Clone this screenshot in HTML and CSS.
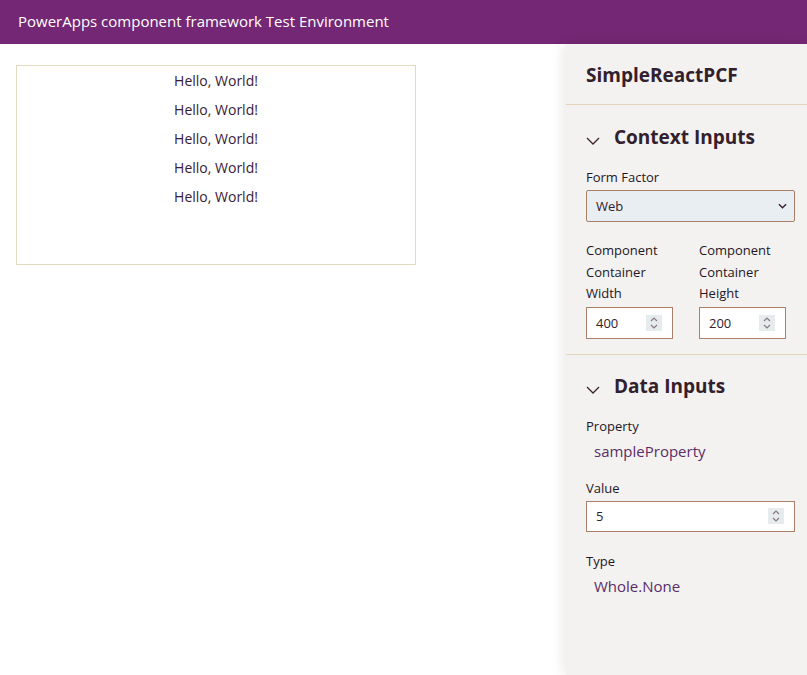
FILE: index.html
```html
<!DOCTYPE html>
<html>
<head>
<meta charset="utf-8">
<link rel="stylesheet" href="styles.css">
</head>
<body>
<header class="topbar">PowerApps component framework Test Environment</header>
<div class="main">
  <div class="canvas">
    <div class="component">
      <div class="hello">Hello, World!</div>
      <div class="hello">Hello, World!</div>
      <div class="hello">Hello, World!</div>
      <div class="hello">Hello, World!</div>
      <div class="hello">Hello, World!</div>
    </div>
  </div>
  <aside class="panel">
    <h1 class="panel-title">SimpleReactPCF</h1>
    <section class="section">
      <h2 class="section-head"><svg class="chev" viewBox="0 0 14 8" width="14" height="8"><path d="M1 1 L7 7 L13 1" fill="none" stroke="#3b2330" stroke-width="1.3"/></svg><span>Context Inputs</span></h2>
      <div class="field">
        <div class="label">Form Factor</div>
        <div class="select"><span>Web</span><svg viewBox="0 0 10 6" width="9" height="6"><path d="M1 1 L5 5 L9 1" fill="none" stroke="#3b2330" stroke-width="1.6"/></svg></div>
      </div>
      <div class="pair">
        <div class="col">
          <div class="label">Component Container Width</div>
          <div class="num small"><span>400</span><svg class="spin" viewBox="0 0 16 16" width="16" height="16"><rect width="16" height="16" fill="#e6ebee"/><path d="M5 6 L8 3 L11 6 M5 10 L8 13 L11 10" fill="none" stroke="#8a7a80" stroke-width="1.2"/></svg></div>
        </div>
        <div class="col">
          <div class="label">Component Container Height</div>
          <div class="num small"><span>200</span><svg class="spin" viewBox="0 0 16 16" width="16" height="16"><rect width="16" height="16" fill="#e6ebee"/><path d="M5 6 L8 3 L11 6 M5 10 L8 13 L11 10" fill="none" stroke="#8a7a80" stroke-width="1.2"/></svg></div>
        </div>
      </div>
    </section>
    <section class="section">
      <h2 class="section-head"><svg class="chev" viewBox="0 0 14 8" width="14" height="8"><path d="M1 1 L7 7 L13 1" fill="none" stroke="#3b2330" stroke-width="1.3"/></svg><span>Data Inputs</span></h2>
      <div class="field">
        <div class="label">Property</div>
        <div class="value">sampleProperty</div>
      </div>
      <div class="field field-num">
        <div class="label">Value</div>
        <div class="num"><span>5</span><svg class="spin" viewBox="0 0 16 16" width="16" height="16"><rect width="16" height="16" fill="#e6ebee"/><path d="M5 6 L8 3 L11 6 M5 10 L8 13 L11 10" fill="none" stroke="#8a7a80" stroke-width="1.2"/></svg></div>
      </div>
      <div class="field">
        <div class="label">Type</div>
        <div class="value">Whole.None</div>
      </div>
    </section>
  </aside>
</div>
</body>
</html>
```
FILE: styles.css
```css
* { box-sizing: border-box; }
html, body { margin: 0; padding: 0; height: 100%; }
body {
  font-family: "Open Sans", "Noto Sans", sans-serif;
  color: #32202c;
  background: #fff;
  display: flex;
  flex-direction: column;
  overflow: hidden;
}
.topbar {
  height: 44px;
  background: #742774;
  color: #fff;
  font-size: 15px;
  padding: 11px 0 0 18px;
  flex: none;
}
.main {
  flex: 1;
  display: flex;
  min-height: 0;
}
.canvas {
  flex: 1;
  padding: 21px 0 0 16px;
}
.component {
  width: 400px;
  height: 200px;
  border: 1px solid #e3d9bf;
  padding-top: 0;
}
.hello {
  text-align: center;
  font-size: 14px;
  line-height: 29px;
  color: #3a1a36;
}
.panel {
  width: 241px;
  flex: none;
  background: #f3f2f1;
  box-shadow: -4px 0 12px rgba(0,0,0,0.08);
}
.panel-title {
  margin: 0;
  font-size: 19px;
  font-weight: 700;
  padding: 18px 20px 0 20px;
  height: 61px;
  border-bottom: 1px solid #e3d4bb;
}
.section {
  padding: 0 12px 0 20px;
  border-bottom: 1px solid #e3d4bb;
}
.section:last-child { border-bottom: none; }
.section-head {
  margin: 0;
  display: flex;
  align-items: center;
  font-size: 19px;
  font-weight: 700;
  height: 62px;
  padding-top: 2px;
}
.section + .section .section-head { height: 61px; }
.chev { margin: 8px 14px 0 0; }
.field { margin-bottom: 14px; }
.field-num { margin-bottom: 19px; }
.pair .label { margin-top: 4px; line-height: 21.5px; }
.label {
  font-size: 13px;
  font-weight: 500;
  line-height: 21px;
  margin-bottom: 2px;
  color: #24161f;
}
.select {
  height: 32px;
  border: 1px solid #a98067;
  border-radius: 2px;
  background: #e9eef2;
  display: flex;
  align-items: center;
  justify-content: space-between;
  padding: 0 7px 0 9px;
  font-size: 13px;
}
.pair {
  display: flex;
  gap: 26px;
  padding-bottom: 15px;
}
.col { width: 87px; }
.num {
  height: 31px;
  border: 1px solid #a98067;
  background: #fff;
  display: flex;
  align-items: center;
  justify-content: space-between;
  padding: 0 10px 0 9px;
  font-size: 13px;
}
.num.small { height: 32px; }
.field-num .label { margin-top: 1px; }
.value {
  font-size: 15px;
  color: #5b2c66;
  padding: 4px 0 3px 8px;
  margin-top: -2px;
}
```
